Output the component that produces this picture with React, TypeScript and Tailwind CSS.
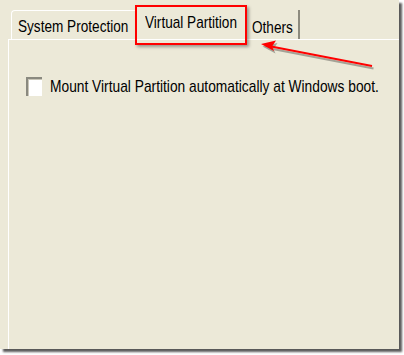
import React from "react";

const font = { fontFamily: '"Liberation Sans", Arial, sans-serif' };

export default function App() {
  return (
    <div className="relative w-[404px] h-[355px] bg-white overflow-hidden" style={font}>
      <div className="w-[399px] h-[349px] bg-[#ECE9D8] shadow-[3px_3px_2px_rgba(0,0,0,0.65)] flex flex-col pl-[8px]">
        {/* tab row */}
        <div className="h-[39px] flex items-end pl-[3px] text-black text-[17px] leading-none">
          <div className="shrink-0 h-[29px] w-[125px] border-l border-t border-white rounded-tl-[4px] pl-[6px] pt-[7px] whitespace-nowrap">
            <span className="inline-block origin-left scale-x-[0.8]">System Protection</span>
          </div>
          <div className="shrink-0 h-[35px] w-[111px] pl-[9px] pt-[10px] whitespace-nowrap">
            <span className="inline-block origin-left scale-x-[0.8]">Virtual Partition</span>
          </div>
          <div className="shrink-0 h-[29px] w-[53px] border-r-2 border-[#8d8b7e] pl-[5px] pt-[9px] whitespace-nowrap">
            <span className="inline-block origin-left scale-x-[0.8]">Others</span>
          </div>
        </div>
        {/* panel */}
        <div className="flex-1 border-t border-l border-white pt-[37px] pl-[17px]">
          <div className="flex items-center gap-[8px] text-[17px] text-black leading-none">
            <div className="shrink-0 w-[16px] h-[19px] bg-white border-t-2 border-l-2 border-[#8a897f] shadow-[inset_1px_1px_0_#c9c6b8]" />
            <span className="inline-block origin-left scale-x-[0.81] whitespace-nowrap">
              Mount Virtual Partition automatically at Windows boot.
            </span>
          </div>
        </div>
      </div>
      {/* red annotation box */}
      <div className="absolute left-[135px] top-[5px] w-[112px] h-[40px] border-2 border-[#ff0000] shadow-[2px_2px_3px_rgba(0,0,0,0.35)]" />
      {/* arrow */}
      <svg className="absolute left-0 top-0" width="404" height="355" viewBox="0 0 404 355">
        <g opacity="0.3" transform="translate(1.5,2.5)">
          <line x1="372" y1="66" x2="266" y2="45.5" stroke="#000" strokeWidth="1.8" />
          <polygon points="261,44 276,40.5 272,46.5 274,51" fill="#000" />
        </g>
        <line x1="372" y1="66" x2="266" y2="45.5" stroke="#ff0000" strokeWidth="1.8" />
        <polygon points="261,44 276,40.5 272,46.5 274,51" fill="#ff0000" />
      </svg>
    </div>
  );
}
